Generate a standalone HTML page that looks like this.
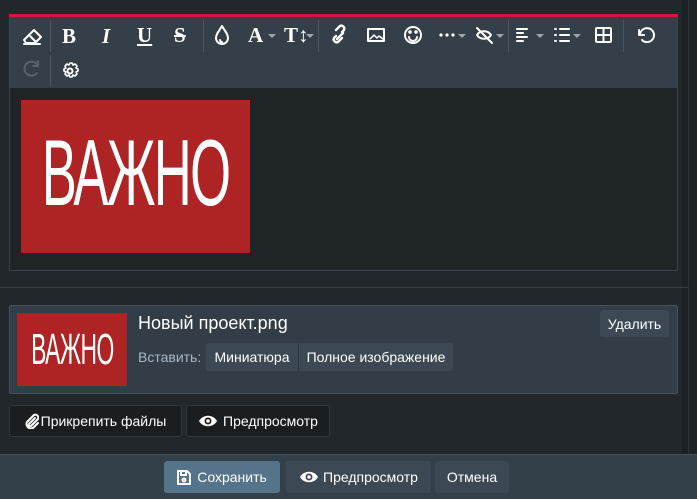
<!DOCTYPE html>
<html><head><meta charset="utf-8"><style>
*{box-sizing:border-box;margin:0;padding:0}
body{width:697px;height:499px;background:#22272b;font-family:"Liberation Sans",sans-serif;position:relative;overflow:hidden;color:#fff}
.abs{position:absolute}
.ic{position:absolute;color:#fff;font-weight:bold;text-align:center}
.sep{position:absolute;width:1px;background:#4a5662}
.btn{position:absolute;border-radius:3px;font-size:14px;display:flex;align-items:center;justify-content:center;color:#fff}
.caret{position:absolute;width:0;height:0;border-left:4px solid transparent;border-right:4px solid transparent;border-top:4px solid #9aa6b0}
</style></head><body>
<div class="abs" style="left:682px;top:0;width:15px;height:499px;background:#1c2125"></div>
<div class="abs" style="left:688px;top:0;width:1px;height:455px;background:#2c3237"></div>
<!-- editor -->
<div class="abs" style="left:9px;top:14px;width:669px;height:257px;border:1px solid #3a444d;background:#1f2427"></div>
<div class="abs" style="left:9px;top:14px;width:669px;height:3px;background:#d3173b"></div>
<div class="abs" style="left:10px;top:17px;width:667px;height:71px;background:#343f49"></div>
<svg class="abs" style="left:0;top:0" width="697" height="100" fill="none" stroke="#fff" stroke-width="2" stroke-linecap="round" stroke-linejoin="round">
<path d="M24 40l10-10 7 7-6 6H26zM29 35l6 6M24 44h16"/>
<path d="M222 26c-3 5-6 8-6 12a6 6 0 0 0 12 0c0-4-3-7-6-12z M220 40a2 2 0 0 0 2 2"/>
<path d="M336 36l-2 2a3 3 0 0 0 4 4l4-4M342 32l2-2a3 3 0 0 0-4-4l-4 4M337 39l6-6" stroke-width="2.4"/>
<rect x="368" y="29" width="16" height="12" stroke-width="2"/><path d="M370 39l4-4 3 3 2-2 4 3" stroke-width="1.5"/>
<circle cx="413" cy="35" r="8"/><path d="M409 37a4 4 0 0 0 8 0"/><circle cx="410" cy="32" r=".8" fill="#fff"/><circle cx="416" cy="32" r=".8" fill="#fff"/>
<circle cx="441" cy="35" r="1.6" fill="#fff" stroke="none"/><circle cx="447" cy="35" r="1.6" fill="#fff" stroke="none"/><circle cx="453" cy="35" r="1.6" fill="#fff" stroke="none"/>
<path d="M477 35c3-5 11-5 14 0-3 5-11 5-14 0zM477 28l15 15"/>
<path d="M517 29h10M517 33h6M517 37h10M517 41h6"/>
<path d="M555 29h1M555 35h1M555 41h1M560 29h9M560 35h9M560 41h9"/>
<rect x="596" y="28" width="15" height="14" rx="1"/><path d="M596 35h15M603.5 28v14"/>
<path d="M639 30v5h5M640 35a7 7 0 1 1 2 5"/>
<path d="M38 66a7 7 0 1 0-1 7M38 61v5h-5" stroke="#57626c"/>
<circle cx="70" cy="71" r="2.5"/><path d="M70 63l2 0 1 2 2-1 2 2-1 2 2 1v2l-2 1 1 2-2 2-2-1-1 2h-2l-1-2-2 1-2-2 1-2-2-1v-2l2-1-1-2 2-2 2 1z" stroke-width="1.6"/>
</svg>
<div class="ic" style="left:62px;top:24px;font-size:21px;font-family:'Liberation Serif',serif">B</div>
<div class="ic" style="left:102px;top:24px;font-size:21px;font-style:italic;font-family:'Liberation Serif',serif">I</div>
<div class="ic" style="left:137px;top:23px;font-size:21px;text-decoration:underline;font-family:'Liberation Serif',serif">U</div>
<div class="ic" style="left:174px;top:23px;font-size:21px;text-decoration:line-through;font-family:'Liberation Serif',serif">S</div>
<div class="ic" style="left:248px;top:23px;font-size:21px;font-family:'Liberation Serif',serif">A</div><div class="caret" style="left:268px;top:34px"></div>
<div class="ic" style="left:284px;top:23px;font-size:21px;font-family:'Liberation Serif',serif">T↕</div><div class="caret" style="left:306px;top:34px"></div>
<div class="caret" style="left:458px;top:34px"></div>
<div class="caret" style="left:496px;top:34px"></div><div class="caret" style="left:536px;top:34px"></div><div class="caret" style="left:573px;top:34px"></div>
<div class="sep" style="left:50px;top:20px;height:32px"></div>
<div class="sep" style="left:203px;top:20px;height:32px"></div>
<div class="sep" style="left:318px;top:20px;height:32px"></div>
<div class="sep" style="left:508px;top:20px;height:32px"></div>
<div class="sep" style="left:623px;top:20px;height:32px"></div>
<div class="sep" style="left:50px;top:55px;height:32px"></div>
<div class="abs" style="left:21px;top:100px;width:229px;height:153px;background:#ae2424;display:flex;align-items:center;justify-content:center"><span style="font-size:94px;color:#fff;transform:scaleX(.56);display:inline-block;letter-spacing:-3px;margin-top:-8px">ВАЖНО</span></div>
<div class="abs" style="left:0;top:287px;width:689px;height:1px;background:#353d44"></div>
<!-- attachment -->
<div class="abs" style="left:9px;top:305px;width:669px;height:89px;background:#323d47;border:1px solid #46515b;border-radius:2px"></div>
<div class="abs" style="left:17px;top:313px;width:110px;height:73px;background:#ae2424;display:flex;align-items:center;justify-content:center"><span style="font-size:44px;color:#fff;transform:scaleX(.52);display:inline-block;letter-spacing:-1px">ВАЖНО</span></div>
<div class="abs" style="left:138px;top:313px;font-size:18px">Новый проект.png</div>
<div class="abs" style="left:138px;top:349px;font-size:14px;color:#a8b8c8">Вставить:</div>
<div class="btn" style="left:206px;top:343px;width:92px;height:28px;background:#3c4853;border-radius:3px 0 0 3px">Миниатюра</div>
<div class="btn" style="left:298px;top:343px;width:155px;height:28px;background:#3c4853;border-left:1px solid #2d3740;border-radius:0 3px 3px 0">Полное изображение</div>
<div class="btn" style="left:600px;top:310px;width:69px;height:27px;background:#3c4853">Удалить</div>
<div class="btn" style="left:9px;top:405px;width:173px;height:32px;background:#1a1e21;border:1px solid #30373d"><svg width="14" height="16" style="margin-right:2px" fill="none" stroke="#fff" stroke-width="2" stroke-linecap="round"><path d="M10 5l-6 6a1.5 1.5 0 0 0 2 2l7-7a3 3 0 0 0-4-4l-7 7a4.5 4.5 0 0 0 6 6l5-5"/></svg>Прикрепить файлы</div>
<div class="btn" style="left:186px;top:405px;width:144px;height:32px;background:#1a1e21;border:1px solid #30373d"><svg width="20" height="14" style="margin-right:5px"><path d="M1 7c4-7 14-7 18 0-4 7-14 7-18 0z" fill="#fff"/><circle cx="10" cy="7" r="3.5" fill="#1a1e21"/><circle cx="10" cy="7" r="1.8" fill="#fff"/></svg>Предпросмотр</div>
<!-- footer -->
<div class="abs" style="left:0;top:454px;width:697px;height:45px;background:#333f49;border-top:1px solid #45505a"></div>
<div class="btn" style="left:164px;top:461px;width:116px;height:32px;background:#557389"><svg width="14" height="15" style="margin-right:6px" fill="none" stroke="#fff" stroke-width="2"><path d="M1 1h9l3 3v10H1z"/><path d="M4 1v4h5V1"/><circle cx="7" cy="10" r="1.5"/></svg>Сохранить</div>
<div class="btn" style="left:286px;top:461px;width:145px;height:32px;background:#3c4853"><svg width="20" height="14" style="margin-right:4px"><path d="M1 7c4-7 14-7 18 0-4 7-14 7-18 0z" fill="#fff"/><circle cx="10" cy="7" r="3.5" fill="#3c4853"/><circle cx="10" cy="7" r="1.8" fill="#fff"/></svg>Предпросмотр</div>
<div class="btn" style="left:435px;top:461px;width:74px;height:32px;background:#3c4853">Отмена</div>
</body></html>
